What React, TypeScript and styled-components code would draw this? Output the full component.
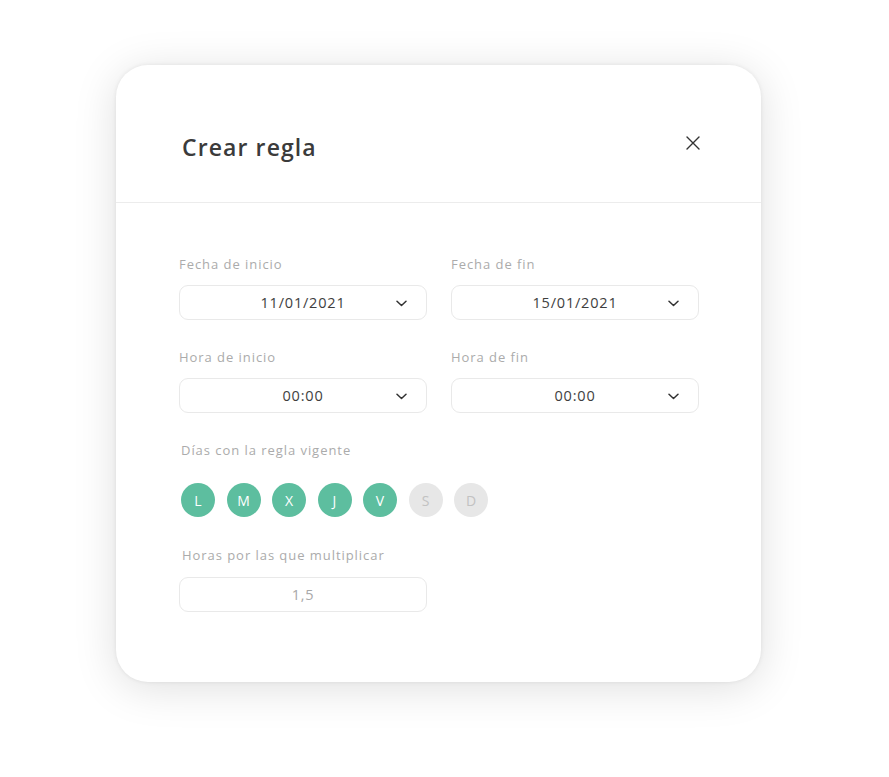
import React from "react"
import styled, { createGlobalStyle } from "styled-components"

const GlobalStyle = createGlobalStyle`
  body {
    margin: 0;
    background: #ffffff;
    font-family: "Open Sans", "Noto Sans", sans-serif;
  }
`

const Page = styled.div`
  width: 889px;
  height: 777px;
  padding: 65px 0 0 116px;
  box-sizing: border-box;
`

const Card = styled.div`
  width: 645px;
  height: 617px;
  background: #ffffff;
  border-radius: 32px;
  box-shadow: 0 0 4px rgba(0, 0, 0, 0.08), 0 6px 44px rgba(0, 0, 0, 0.13);
  display: flex;
  flex-direction: column;
`

const Header = styled.div`
  height: 138px;
  box-sizing: border-box;
  border-bottom: 1px solid #ececec;
  display: flex;
  align-items: flex-start;
  justify-content: space-between;
  padding: 66px 60px 0 66px;
`

const Title = styled.h1`
  margin: 0;
  font-size: 23px;
  line-height: 32px;
  font-weight: 600;
  letter-spacing: 1.1px;
  color: #3b3b3b;
`

const CloseButton = styled.button`
  border: none;
  background: none;
  padding: 0;
  width: 16px;
  height: 16px;
  margin-top: 4px;
  display: flex;
  cursor: pointer;
`

const Body = styled.div`
  padding: 52px 62px 0 63px;
  display: flex;
  flex-direction: column;
`

const Row = styled.div`
  display: grid;
  grid-template-columns: 248px 248px;
  gap: 24px;
  margin-bottom: 28px;
`

const Field = styled.div`
  display: flex;
  flex-direction: column;
`

const Label = styled.label<{ $indent?: number; $gap?: number }>`
  font-size: 13px;
  letter-spacing: 0.95px;
  color: #ababab;
  margin: 0 0 ${p => p.$gap ?? 12}px ${p => p.$indent ?? 0}px;
  line-height: 18px;
`

const Select = styled.div<{ $muted?: boolean }>`
  height: 35px;
  box-sizing: border-box;
  border: 1px solid #e9e9e9;
  border-radius: 9px;
  display: flex;
  align-items: center;
  position: relative;
  font-size: 14.5px;
  letter-spacing: 0.8px;
  color: ${p => (p.$muted ? "#a8a8a8" : "#3e3e3e")};
`

const Value = styled.span`
  flex: 1;
  text-align: center;
`

const Chevron = styled.svg`
  position: absolute;
  right: 19px;
  top: 14px;
`

const Days = styled.div`
  display: flex;
  gap: 11.5px;
  margin: 12px 0 29px 2px;
`

const Day = styled.div<{ $active: boolean }>`
  width: 34px;
  height: 34px;
  border-radius: 50%;
  display: flex;
  align-items: center;
  justify-content: center;
  font-size: 14px;
  font-weight: 500;
  background: ${p => (p.$active ? "#5dbe9f" : "#e7e7e7")};
  color: ${p => (p.$active ? "#ffffff" : "#c2c2c2")};
`

const Small = styled.div`
  width: 248px;
`

const ChevronIcon = () => (
  <Chevron width="11" height="7" viewBox="0 0 11 7">
    <path d="M1 1.2l4.5 4.3L10 1.2" fill="none" stroke="#333" strokeWidth="1.5" strokeLinecap="round" strokeLinejoin="round" />
  </Chevron>
)

const SelectField = ({ label, value }: { label: string; value: string }) => (
  <Field>
    <Label>{label}</Label>
    <Select>
      <Value>{value}</Value>
      <ChevronIcon />
    </Select>
  </Field>
)

const days = [
  { l: "L", on: true },
  { l: "M", on: true },
  { l: "X", on: true },
  { l: "J", on: true },
  { l: "V", on: true },
  { l: "S", on: false },
  { l: "D", on: false },
]

export default function App() {
  return (
    <Page>
      <GlobalStyle />
      <Card>
        <Header>
          <Title>Crear regla</Title>
          <CloseButton aria-label="Cerrar">
            <svg width="16" height="16" viewBox="0 0 16 16">
              <path d="M2 2l12 12M14 2L2 14" stroke="#333" strokeWidth="1.4" strokeLinecap="round" />
            </svg>
          </CloseButton>
        </Header>
        <Body>
          <Row>
            <SelectField label="Fecha de inicio" value="11/01/2021" />
            <SelectField label="Fecha de fin" value="15/01/2021" />
          </Row>
          <Row>
            <SelectField label="Hora de inicio" value="00:00" />
            <SelectField label="Hora de fin" value="00:00" />
          </Row>
          <Label $indent={2}>Días con la regla vigente</Label>
          <Days>
            {days.map(d => (
              <Day key={d.l} $active={d.on}>
                {d.l}
              </Day>
            ))}
          </Days>
          <Label $indent={3} $gap={13}>Horas por las que multiplicar</Label>
          <Small>
            <Select $muted>
              <Value>1,5</Value>
            </Select>
          </Small>
        </Body>
      </Card>
    </Page>
  )
}
